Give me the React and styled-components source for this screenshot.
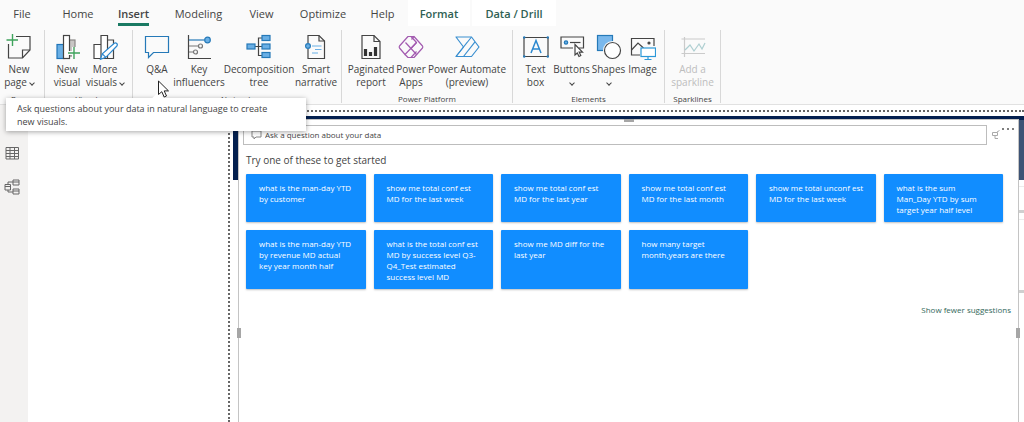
import React, { useState } from "react";
import styled, { createGlobalStyle } from "styled-components";

const tabs = [
  { name: "File", width: 44 },
  { name: "Home", width: 56 },
  { name: "Insert", width: 55 },
  { name: "Modeling", width: 75 },
  { name: "View", width: 51 },
  { name: "Optimize", width: 72 },
  { name: "Help", width: 47 },
  { name: "Format", width: 62, contextual: true },
  { name: "Data / Drill", width: 84, contextual: true },
];

const suggestions = [
  "what is the man-day YTD\nby customer",
  "show me total conf est\nMD for the last week",
  "show me total conf est\nMD for the last year",
  "show me total conf est\nMD for the last month",
  "show me total unconf est\nMD for the last week",
  "what is the sum\nMan_Day YTD by sum\ntarget year half level",
  "what is the man-day YTD\nby revenue MD actual\nkey year month half",
  "what is the total conf est\nMD by success level Q3-\nQ4_Test estimated\nsuccess level MD",
  "show me MD diff for the\nlast year",
  "how many target\nmonth,years are there",
];

const Icon = ({ children, size = 26 }) => (
  <svg
    width={size}
    height={size}
    viewBox={`0 0 ${size} ${size}`}
    fill="none"
    stroke="#444"
    strokeWidth="1.2"
    aria-hidden="true"
  >
    {children}
  </svg>
);

const NewPageIcon = () => (
  <Icon>
    <path d="M10 2.500H24V16L16.500 24H2.500V10" />
    <path d="M16.500 24V16H24" />
    <path d="M6.500 0V12M0.500 6H12" stroke="#3fa35c" strokeWidth="1.400" />
  </Icon>
);

const NewVisualIcon = () => (
  <Icon>
    <rect x="14" y="6" width="7" height="16" fill="#c8c6c4" stroke="#8a8886" />
    <rect x="3" y="10.500" width="7" height="14" fill="#69afe5" stroke="#1f74b8" />
    <rect x="9.500" y="1.500" width="6" height="23" fill="#fff" />
    <path d="M20 13V25M14 19H26" stroke="#fafafa" strokeWidth="4" />
    <path d="M20 13V25M14 19H26" stroke="#3fa35c" strokeWidth="1.400" />
  </Icon>
);

const MoreVisualsIcon = () => (
  <Icon>
    <path d="M9 10.500H2V24.500H15.500V1.500H9V24.500" fill="#fff" />
    <path d="M15.500 6H21.500V24.500H15.500" />
    <path
      d="M8.500 25.300L10.300 19.800L22.300 9.300C24 8 26.200 10.200 24.900 12L13.800 23.300Z"
      fill="#fff"
      stroke="#2b88cf"
    />
    <path d="M10.300 19.800L13.800 23.300" stroke="#2b88cf" />
  </Icon>
);

const QnaIcon = () => (
  <Icon>
    <path d="M1.500 2.500H24.500V18.500H9.500L4.500 23.500V18.500H1.500Z" stroke="#2579b8" />
  </Icon>
);

const KeyInfluencersIcon = () => (
  <Icon>
    <path d="M2.500 1V24.500H25" />
    <path d="M3 6H18.500" stroke="#2579b8" />
    <circle cx="21.500" cy="6" r="2.800" fill="#69afe5" stroke="#2579b8" />
    <path d="M3 12H12.500M3 18H7.500" stroke="#777" />
    <circle cx="14.500" cy="12" r="2" stroke="#777" />
    <circle cx="9.500" cy="18" r="2" stroke="#777" />
  </Icon>
);

const DecompositionIcon = () => (
  <Icon>
    <path d="M9 12.500H16M16 4H12.500V21.500H16" />
    <g fill="#69afe5" stroke="#2579b8">
      <rect x="1" y="10" width="8" height="5" />
      <rect x="16" y="1.500" width="8" height="5" />
      <rect x="16" y="10" width="8" height="5" />
      <rect x="16" y="18.500" width="8" height="5" />
    </g>
  </Icon>
);

const NarrativeIcon = () => (
  <Icon>
    <path d="M5 9V1.500H16L21.500 7V24.500H5V15" />
    <path d="M16 1.500V7H21.500" />
    <circle cx="5" cy="12" r="2.400" fill="#69afe5" stroke="#2579b8" />
    <path d="M9 12H18.500M12 15.500H18.500M9 19H15" stroke="#69afe5" />
  </Icon>
);

const PaginatedIcon = () => (
  <Icon>
    <path d="M4 1.500H16L22 7.500V24.500H4Z" />
    <path d="M16 1.500V7.500H22" />
    <path d="M7.500 15V22M12.500 18V22M17.500 13V22" stroke="#333" strokeWidth="3.200" />
  </Icon>
);

const PowerAppsIcon = () => (
  <Icon>
    <g stroke="#a35bb0" strokeLinejoin="round">
      <path d="M10 2.500H13L18.500 8.500L7 20.500L1.500 14Q0.800 13 1.500 12Z" />
      <path d="M13.500 5.500L16 2.500L24.500 12Q25.200 13 24.500 14L16 23.500H10L7 20.500" />
      <path d="M13 2.500H16M7.500 8.500L18.500 20.500M18.500 8.500L13 14.500M13 23.500L18.500 17.500" />
    </g>
  </Icon>
);

const PowerAutomateIcon = () => (
  <Icon>
    <g stroke="#3a8fd0" strokeLinejoin="round">
      <path d="M2 3H17.500L25 13L17.500 22.500H2L9.500 13Z" />
      <path d="M17.500 3L2 22.500M21 7.800L9.500 22.500M9.500 13L13 8.500" />
    </g>
  </Icon>
);

const TextBoxIcon = () => (
  <Icon>
    <path d="M1 3.500H25V22.500H1Z" />
    <path d="M8 19L13 6.500L18 19M9.700 15H16.300" stroke="#2b88cf" strokeWidth="1.500" />
    <g fill="#2579b8" stroke="none">
      <circle cx="1.200" cy="3.500" r="1.200" />
      <circle cx="24.800" cy="3.500" r="1.200" />
      <circle cx="1.200" cy="22.500" r="1.200" />
      <circle cx="24.800" cy="22.500" r="1.200" />
    </g>
  </Icon>
);

const ButtonsIcon = () => (
  <Icon>
    <path d="M14 14H2V3H24.500V14H20" />
    <circle cx="7" cy="8.500" r="1.700" fill="#69afe5" stroke="#2579b8" />
    <path d="M11 8.500H21.500" />
    <path d="M16 10.500V21L18.300 19L20 22.500L21.800 21.600L20.200 18.200H23.500Z" fill="#fff" />
  </Icon>
);

const ShapesIcon = () => (
  <Icon>
    <rect x="1.500" y="1.500" width="15" height="15" fill="#7ab8ec" stroke="#2579b8" />
    <circle cx="16.500" cy="16.500" r="9.500" fill="#fafafa" stroke="none" />
    <circle cx="16.500" cy="16.500" r="8" fill="#fff" />
  </Icon>
);

const ImageIcon = () => (
  <Icon>
    <path d="M10 21H1.500V4.500H24V12" />
    <path d="M1.500 16L8 9L13.500 14" />
    <circle cx="19" cy="9" r="1" fill="#444" />
    <rect x="11" y="14" width="14.500" height="8.500" fill="#fff" stroke="#2b98d8" />
    <path d="M18 22.500V25.500M14.500 25.500H21.500" stroke="#2b98d8" />
  </Icon>
);

const SparklineIcon = () => (
  <Icon>
    <path d="M4.500 3V23M1.500 5H25M1.500 19.500H25" stroke="#c0c0c0" />
    <path d="M5 16L10 11L14 17L19 10L22 15L25 9" stroke="#9cc5c8" />
  </Icon>
);

const groups = [
  {
    label: "Pages",
    width: 45,
    align: "flex-start",
    items: [{ text: ["New", "page"], width: 38, icon: NewPageIcon, menu: true }],
  },
  {
    label: "Visuals",
    width: 88,
    align: "flex-start",
    items: [
      { text: ["New", "visual"], width: 44, icon: NewVisualIcon },
      { text: ["More", "visuals"], width: 32, icon: MoreVisualsIcon, menu: true },
    ],
  },
  {
    label: "AI visuals",
    width: 209,
    items: [
      { text: ["Q&A"], width: 38, icon: QnaIcon },
      { text: ["Key", "influencers"], width: 46, icon: KeyInfluencersIcon },
      { text: ["Decomposition", "tree"], width: 74, icon: DecompositionIcon },
      { text: ["Smart", "narrative"], width: 40, icon: NarrativeIcon },
    ],
  },
  {
    label: "Power Platform",
    width: 171,
    items: [
      { text: ["Paginated", "report"], width: 46, icon: PaginatedIcon },
      { text: ["Power", "Apps"], width: 34, icon: PowerAppsIcon },
      { text: ["Power Automate", "(preview)"], width: 78, icon: PowerAutomateIcon },
    ],
  },
  {
    label: "Elements",
    width: 152,
    items: [
      { text: ["Text", "box"], width: 34, icon: TextBoxIcon },
      { text: ["Buttons", ""], width: 38, icon: ButtonsIcon, menu: true },
      { text: ["Shapes", ""], width: 36, icon: ShapesIcon, menu: true },
      { text: ["Image"], width: 32, icon: ImageIcon },
    ],
  },
  {
    label: "Sparklines",
    width: 56,
    items: [
      { text: ["Add a", "sparkline"], width: 44, icon: SparklineIcon, disabled: true },
    ],
  },
];

const App = () => {
  const [activeTab, setActiveTab] = useState("Insert");
  const [question, setQuestion] = useState("");

  return (
    <Page>
      <GlobalStyle />
      <TabBar>
        {tabs.map((tab) => (
          <Tab
            key={tab.name}
            $width={tab.width}
            $contextual={tab.contextual}
            $active={activeTab === tab.name}
            onClick={() => setActiveTab(tab.name)}
          >
            <span>{tab.name}</span>
          </Tab>
        ))}
      </TabBar>

      <Ribbon>
        {groups.map((group) => (
          <Group key={group.label} $width={group.width}>
            <GroupItems $align={group.align}>
              {group.items.map((item) => {
                const ItemIcon = item.icon;
                return (
                  <RibbonButton
                    key={item.text[0]}
                    $width={item.width}
                    disabled={item.disabled}
                  >
                    <ItemIcon />
                    {item.text.map((line, index) => (
                      <ButtonLine key={index}>
                        {line}
                        {item.menu && index === item.text.length - 1 && <Chevron />}
                      </ButtonLine>
                    ))}
                  </RibbonButton>
                );
              })}
            </GroupItems>
            <GroupLabel>{group.label}</GroupLabel>
          </Group>
        ))}
        <Tooltip role="tooltip">
          Ask questions about your data in natural language to create
          <br />
          new visuals.
        </Tooltip>
        <Pointer width="14" height="19" viewBox="0 0 14 19" aria-hidden="true">
          <path
            d="M1.500 1V14.500L4.800 11.700L7.200 17L9.500 16L7.200 10.900H11.500Z"
            fill="#fff"
            stroke="#222"
            strokeWidth="1"
          />
        </Pointer>
      </Ribbon>

      <Workspace>
        <Sidebar>
          <SideButton aria-label="Data view">
            <svg width="16" height="16" viewBox="0 0 16 16" fill="none" stroke="#666">
              <path d="M2 2.500H14.500V14H2ZM2 5.500H14.500M2 8.500H14.500M2 11.500H14.500M6 2.500V14M10.500 2.500V14" />
            </svg>
          </SideButton>
          <SideButton aria-label="Model view">
            <svg width="16" height="16" viewBox="0 0 16 16" fill="none" stroke="#666">
              <path d="M1 5.500H6.500V11H1ZM1 7.500H6.500M9 1H15V6H9ZM9 3H15M9 10H15V15H9ZM9 12H15M4 5.500V3H9M4 11V13H9" />
            </svg>
          </SideButton>
        </Sidebar>
        <Canvas>
          <ReportPage>
            <Visual>
              <Handle $side="top" />
              <Handle $side="left" />
              <Handle $side="right" />
              <QuestionRow>
                <QuestionBox>
                  <svg width="11" height="10" viewBox="0 0 11 10" fill="none" stroke="#888">
                    <path d="M1 1H10V7H5L3 9V7H1Z" />
                  </svg>
                  <input
                    aria-label="Ask a question about your data"
                    placeholder="Ask a question about your data"
                    value={question}
                    onChange={(e) => setQuestion(e.target.value)}
                  />
                </QuestionBox>
                <svg width="8" height="10" viewBox="0 0 8 10" fill="none" stroke="#aaa">
                  <path d="M0.500 2.500H5.500V5.500H0.500ZM5 2L7.500 0.500M3 5.500V8.500H6" />
                </svg>
                <MoreButton aria-label="More options">
                  <svg width="14" height="4" viewBox="0 0 14 4" fill="#555">
                    <circle cx="2" cy="2" r="1" />
                    <circle cx="7" cy="2" r="1" />
                    <circle cx="12" cy="2" r="1" />
                  </svg>
                </MoreButton>
              </QuestionRow>
              <Prompt>Try one of these to get started</Prompt>
              <Suggestions>
                {suggestions.map((text) => (
                  <Suggestion key={text} onClick={() => setQuestion(text.replace(/\n/g, " "))}>
                    {text}
                  </Suggestion>
                ))}
              </Suggestions>
              <FewerLink href="#">Show fewer suggestions</FewerLink>
            </Visual>
            <Neighbour>
              <NeighbourBanner />
              <NeighbourCard $height={27} />
              <NeighbourCard $height={74} />
            </Neighbour>
          </ReportPage>
        </Canvas>
      </Workspace>
    </Page>
  );
};

const GlobalStyle = createGlobalStyle`
  * {
    box-sizing: border-box;
  }
  body {
    margin: 0;
    background: #fff;
    color: #444;
    font-family: "Open Sans", "Noto Sans", sans-serif;
  }
  button,
  input {
    font-family: inherit;
    color: inherit;
    border: none;
    background: transparent;
    padding: 0;
    margin: 0;
  }
`;

const Page = styled.div`
  display: flex;
  flex-direction: column;
  min-height: 100vh;
  overflow: hidden;
`;

const TabBar = styled.nav`
  display: flex;
  height: 26px;
  background: #fafafa;
`;

const Tab = styled.button`
  flex: none;
  width: ${(props) => props.$width}px;
  margin-left: ${(props) => (props.$contextual ? 2 : 0)}px;
  font-size: 11px;
  line-height: 18px;
  white-space: nowrap;
  font-weight: ${(props) => (props.$active || props.$contextual ? 600 : 400)};
  color: ${(props) => (props.$contextual ? "#2f5f53" : "#444")};
  background: ${(props) => (props.$contextual ? "#fff" : "transparent")};
  span {
    display: inline-block;
    padding-top: 4px;
    border-bottom: 3px solid
      ${(props) => (props.$active ? "#1a7a63" : "transparent")};
  }
  &:first-child {
    margin-right: 6px;
  }
`;

const Ribbon = styled.div`
  position: relative;
  display: flex;
  padding: 4px 0 1px;
  background: #fafafa;
  border-bottom: 1px solid #e1e1e1;
`;

const Group = styled.section`
  flex: none;
  display: flex;
  flex-direction: column;
  width: ${(props) => props.$width}px;
  height: 73px;
  padding-top: 4px;
  border-right: 1px solid #d8d8d8;
`;

const GroupItems = styled.div`
  display: flex;
  justify-content: ${(props) => props.$align || "center"};
  height: 60px;
`;

const RibbonButton = styled.button`
  flex: none;
  display: flex;
  flex-direction: column;
  align-items: center;
  width: ${(props) => props.$width}px;
  svg {
    margin-bottom: 3px;
    opacity: ${(props) => (props.disabled ? 0.8 : 1)};
  }
  color: ${(props) => (props.disabled ? "#bdbdbd" : "#444")};
`;

const ButtonLine = styled.span`
  display: flex;
  align-items: center;
  gap: 3px;
  height: 13px;
  font-size: 10px;
  line-height: 13px;
  white-space: nowrap;
`;

const Chevron = styled.i`
  width: 4px;
  height: 4px;
  border: solid #444;
  border-width: 0 1px 1px 0;
  transform: rotate(45deg);
`;

const GroupLabel = styled.div`
  font-size: 8px;
  line-height: 9px;
  text-align: center;
`;

const Tooltip = styled.div`
  position: absolute;
  z-index: 2;
  left: 6px;
  top: 72px;
  width: 300px;
  padding: 4px 11px 3px;
  font-size: 9px;
  line-height: 13px;
  background: #fff;
  box-shadow: 0 1px 5px rgba(0, 0, 0, 0.35);
  &::before {
    content: "";
    position: absolute;
    left: 148px;
    top: -4px;
    width: 8px;
    height: 8px;
    background: #fff;
    transform: rotate(45deg);
  }
`;

const Pointer = styled.svg`
  position: absolute;
  z-index: 3;
  left: 157px;
  top: 54px;
`;

const Workspace = styled.main`
  flex: 1;
  display: flex;
`;

const Sidebar = styled.aside`
  display: flex;
  flex-direction: column;
  align-items: center;
  gap: 18px;
  width: 28px;
  padding: 40px 4px 0 0;
  background: #f3f2f1;
`;

const SideButton = styled.button`
  width: 16px;
  height: 16px;
  svg {
    display: block;
  }
`;

const Canvas = styled.div`
  flex: 1;
  display: flex;
  padding: 5px 2px 0 200px;
`;

const ReportPage = styled.div`
  flex: 1;
  display: flex;
  padding: 4px 0 0 3px;
  margin-right: -2px;
  border: 2px dotted #666;
  border-width: 2px 0 0 2px;
  background: linear-gradient(#04204f, #04204f) 3px 4px / 100% 64px no-repeat;
`;

const Visual = styled.section`
  position: relative;
  flex: 1;
  margin: 3px 0 0 5px;
  padding: 5px 7px 0 4px;
  background: #fff;
  border: 1px solid #c4c4c4;
  border-bottom: none;
`;

const Handle = styled.span`
  position: absolute;
  background: #a6a6a6;
  ${(props) =>
    props.$side === "top"
      ? "top: -1px; left: 50%; width: 10px; height: 3px; margin-left: -5px;"
      : `${props.$side}: -2px; top: 208px; width: 4px; height: 10px;`}
`;

const QuestionRow = styled.div`
  display: flex;
  align-items: center;
  gap: 5px;
`;

const QuestionBox = styled.label`
  flex: 1;
  display: flex;
  align-items: center;
  gap: 3px;
  height: 20px;
  padding-left: 7px;
  border: 1px solid #bdbdbd;
  input {
    flex: 1;
    font-size: 8px;
    line-height: 12px;
    outline: none;
  }
  input::placeholder {
    color: #444;
    opacity: 1;
  }
`;

const MoreButton = styled.button`
  align-self: flex-start;
  height: 8px;
  margin: 0 -4px;
  svg {
    display: block;
  }
`;

const Prompt = styled.h1`
  margin: 8px 0 6px 3px;
  font-size: 10px;
  line-height: 15px;
  font-weight: 400;
`;

const Suggestions = styled.div`
  display: grid;
  grid-template-columns: repeat(6, minmax(0, 1fr));
  grid-template-rows: 48px auto;
  gap: 8px;
  margin: 0 8px 0 3px;
`;

const Suggestion = styled.button`
  display: flex;
  align-items: flex-start;
  padding: 8px 13px 7px;
  font-size: 8px;
  line-height: 11px;
  font-weight: 500;
  color: #fff;
  text-align: left;
  white-space: pre;
  background: #118dff;
  border-radius: 1px;
  box-shadow: 0 1px 2px rgba(0, 0, 0, 0.25);
`;

const FewerLink = styled.a`
  display: block;
  margin-top: 15px;
  font-size: 8px;
  line-height: 12px;
  text-align: right;
  text-decoration: none;
  color: #33685a;
`;

const Neighbour = styled.div`
  display: flex;
  flex-direction: column;
  gap: 6px;
  width: 5px;
  padding-top: 4px;
`;

const NeighbourBanner = styled.div`
  height: 60px;
  background: #3d5375;
`;

const NeighbourCard = styled.div`
  height: ${(props) => props.$height}px;
  border-top: 1px solid #ececec;
  border-bottom: 3px solid #cfcfcf;
`;

export default App;
